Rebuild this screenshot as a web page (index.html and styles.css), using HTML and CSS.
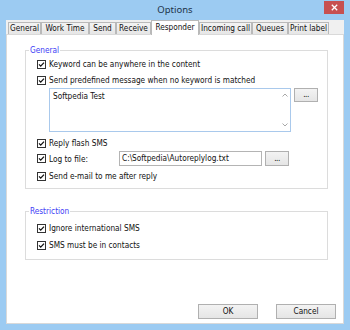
FILE: index.html
```html
<!DOCTYPE html>
<html>
<head>
<meta charset="utf-8">
<title>Options</title>
<link rel="stylesheet" href="styles.css">
</head>
<body>
<svg class="defs" width="0" height="0" aria-hidden="true">
  <symbol id="check" viewBox="0 0 9 9">
    <rect x="0.5" y="0.5" width="8" height="8" fill="#fff" stroke="#333"/>
    <path d="M2 4.4 L3.7 6.1 L7 2.6" fill="none" stroke="#111" stroke-width="1.3"/>
  </symbol>
</svg>
<div class="window">
  <header class="titlebar">
    <span class="spacer"></span>
    <span class="title">Options</span>
    <span class="close"><svg width="7" height="7" viewBox="0 0 7 7"><path d="M0.8 0.8 L6.2 6.2 M6.2 0.8 L0.8 6.2" stroke="#fff" stroke-width="1.3"/></svg></span>
  </header>
  <nav class="tabs">
    <div class="tab tab-general">General</div>
    <div class="tab tab-worktime">Work Time</div>
    <div class="tab tab-send">Send</div>
    <div class="tab tab-receive">Receive</div>
    <div class="tab tab-responder active">Responder</div>
    <div class="tab tab-incoming">Incoming call</div>
    <div class="tab tab-queues">Queues</div>
    <div class="tab tab-print">Print label</div>
  </nav>
  <main class="page">
    <fieldset class="group group-general">
      <legend>General</legend>
      <div class="group-body general-body">
        <div class="row"><svg class="cb"><use href="#check"/></svg><span>Keyword can be anywhere in the content</span></div>
        <div class="row row-2"><svg class="cb"><use href="#check"/></svg><span>Send predefined message when no keyword is matched</span></div>
        <div class="memo-row">
          <div class="memo">
            <div class="memo-text">Softpedia Test</div>
            <div class="memo-scroll">
              <svg width="6" height="4" viewBox="0 0 6 4"><path d="M0.5 3.5 L3 1 L5.5 3.5" fill="none" stroke="#a8a8a8" stroke-width="1"/></svg>
              <svg width="6" height="4" viewBox="0 0 6 4"><path d="M0.5 0.5 L3 3 L5.5 0.5" fill="none" stroke="#a8a8a8" stroke-width="1"/></svg>
            </div>
          </div>
          <div class="btn btn-dots">...</div>
        </div>
        <div class="row row-flash"><svg class="cb"><use href="#check"/></svg><span>Reply flash SMS</span></div>
        <div class="row row-log"><svg class="cb"><use href="#check"/></svg><span class="log-label">Log to file:</span><div class="input">C:\Softpedia\Autoreplylog.txt</div><div class="btn btn-dots btn-dots-log">...</div></div>
        <div class="row row-mail"><svg class="cb"><use href="#check"/></svg><span>Send e-mail to me after reply</span></div>
      </div>
    </fieldset>
    <fieldset class="group group-restriction">
      <legend>Restriction</legend>
      <div class="group-body restriction-body">
        <div class="row"><svg class="cb"><use href="#check"/></svg><span>Ignore international SMS</span></div>
        <div class="row row-contacts"><svg class="cb"><use href="#check"/></svg><span>SMS must be in contacts</span></div>
      </div>
    </fieldset>
    <div class="buttons">
      <div class="btn btn-dialog">OK</div>
      <div class="btn btn-dialog">Cancel</div>
    </div>
  </main>
</div>
</body>
</html>
```
FILE: styles.css
```css
* { box-sizing: border-box; }
html, body { margin: 0; padding: 0; }
body {
  width: 350px;
  height: 330px;
  overflow: hidden;
  font-family: "DejaVu Sans Condensed", "DejaVu Sans", sans-serif;
  font-stretch: condensed;
  font-size: 8.2px;
  color: #111;
}
.defs { position: absolute; width: 0; height: 0; }

.window {
  width: 350px;
  height: 330px;
  background: #9ccbf2;
  padding: 0 6px 6px 6px;
  display: flex;
  flex-direction: column;
}

.titlebar {
  height: 20px;
  display: grid;
  grid-template-columns: 1fr auto 1fr;
  align-items: start;
}
.title {
  font-family: "Noto Sans", "Open Sans", sans-serif;
  font-size: 9.5px;
  line-height: 20px;
  color: #203248;
}
.close {
  justify-self: end;
  width: 20px;
  height: 13px;
  margin-top: 1px;
  background: #c75050;
  display: flex;
  align-items: center;
  justify-content: center;
}
.close svg { display: block; }

.tabs {
  height: 14px;
  background: #f0f0f0;
  display: flex;
  align-items: flex-end;
  padding-left: 2px;
}
.tab {
  height: 12px;
  border: 1px solid #b9b9b9;
  border-bottom: none;
  background: linear-gradient(#f3f3f3, #e6e6e6);
  text-align: center;
  line-height: 11px;
  white-space: nowrap;
}
.tab.active {
  height: 15px;
  margin-bottom: -1px;
  background: #fff;
  position: relative;
  z-index: 1;
  line-height: 12px;
}
.tab-general { width: 33px; }
.tab-worktime { width: 48px; }
.tab-send { width: 27px; }
.tab-receive { width: 35px; }
.tab-responder { width: 48px; }
.tab-incoming { width: 53px; }
.tab-queues { width: 36px; }
.tab-print { width: 41px; }

.page {
  flex: 1;
  background: #fff;
  border: 1px solid #d9d9d9;
  display: flex;
  flex-direction: column;
}

.group {
  margin: 0 15px 0 18px;
  padding: 0;
  border: 1px solid #dcdcdc;
  min-width: 0;
}
.group legend {
  margin-left: 3px;
  padding: 0 1px;
  line-height: 10px;
  height: 10px;
  color: #3c3cf6;
}
.group-general { margin-top: 10px; }
.group-restriction { margin-top: 17px; }

.group-body { padding-left: 11px; }
.general-body { padding-top: 2px; padding-bottom: 5px; }
.restriction-body { padding-top: 5px; padding-bottom: 7px; }

.row {
  height: 14px;
  display: flex;
  align-items: center;
  gap: 3px;
  white-space: nowrap;
}
.cb { width: 9px; height: 9px; flex: none; display: block; }
.row-2 { margin-top: 2px; }
.row-flash { margin-top: 4px; }
.row-log { margin-top: 1px; height: 15px; }
.row-mail { margin-top: 3px; }
.row-contacts { margin-top: 3px; }

.memo-row {
  margin-top: 1px;
  margin-left: 12px;
  display: flex;
  align-items: flex-start;
  gap: 3px;
}
.memo {
  width: 242px;
  height: 44px;
  border: 1px solid #a9c9ec;
  display: flex;
}
.memo-text {
  flex: 1;
  padding: 2px 0 0 3px;
  line-height: 10px;
}
.memo-scroll {
  width: 11px;
  padding: 4px 0 4px 0;
  display: flex;
  flex-direction: column;
  justify-content: space-between;
  align-items: center;
}
.memo-scroll svg { display: block; }

.log-label { width: 67px; }
.input {
  width: 143px;
  height: 15px;
  border: 1px solid #b4b4b4;
  padding-left: 2px;
  line-height: 13px;
  overflow: hidden;
}

.btn {
  border: 1px solid #b0b0b0;
  background: linear-gradient(#f3f3f3, #e5e5e5);
  text-align: center;
}
.btn-dots {
  width: 24px;
  height: 14px;
  line-height: 12px;
  font-size: 8px;
  letter-spacing: -0.5px;
  color: #000;
}
.btn-dots-log { height: 15px; line-height: 13px; }

.buttons {
  margin-top: auto;
  display: flex;
  justify-content: flex-end;
  gap: 18px;
  padding: 0 7px 4px 0;
}
.btn-dialog {
  width: 60px;
  height: 15px;
  line-height: 13px;
}
```
